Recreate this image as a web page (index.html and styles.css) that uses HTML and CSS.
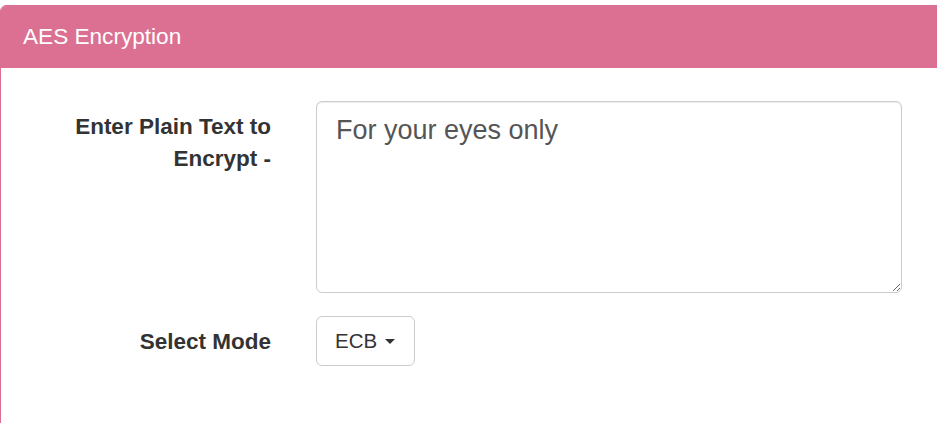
FILE: index.html
```html
<!DOCTYPE html>
<html lang="en">
<head>
<meta charset="utf-8">
<title>AES Encryption</title>
<link rel="stylesheet" href="styles.css">
</head>
<body>
<div class="panel">
  <div class="panel-heading">AES Encryption</div>
  <div class="panel-body">
    <form class="form-grid">
      <label class="form-label" for="plain">Enter Plain Text to Encrypt -</label>
      <textarea id="plain" class="form-textarea">For your eyes only</textarea>
      <label class="form-label">Select Mode</label>
      <div class="form-field">
        <button type="button" class="dropdown-btn">ECB <span class="caret"></span></button>
      </div>
    </form>
  </div>
</div>
</body>
</html>
```
FILE: styles.css
```css
html, body {
  margin: 0;
  padding: 0;
  background: #fff;
  overflow: hidden;
}
body {
  padding-top: 5px;
  font-family: "Liberation Sans", Arial, sans-serif;
  color: #333;
}
.panel {
  border: 1px solid #db7093;
  border-radius: 6px;
  margin-right: -30px;
  min-height: 600px;
  background: #fff;
}
.panel-heading {
  background: #db7093;
  color: #fff;
  height: 62px;
  display: flex;
  align-items: center;
  padding: 0 22px;
  font-size: 22.6px;
  border-radius: 5px 5px 0 0;
}
.panel-body {
  padding-top: 33px;
}
.form-grid {
  display: grid;
  grid-template-columns: 270px 586px;
  column-gap: 45px;
  row-gap: 23px;
  margin: 0;
}
.form-label {
  text-align: right;
  font-weight: bold;
  font-size: 22.5px;
  line-height: 32px;
  padding-top: 10px;
  color: #333;
}
.form-textarea {
  box-sizing: border-box;
  width: 586px;
  height: 192px;
  border: 1px solid #ccc;
  border-radius: 6px;
  padding: 11px 19px;
  font-family: "Liberation Sans", Arial, sans-serif;
  font-size: 27px;
  line-height: 34px;
  color: #555;
  resize: vertical;
  box-shadow: inset 0 1px 1px rgba(0,0,0,0.075);
  margin: 0;
}
.form-field {
  display: flex;
}
.dropdown-btn {
  box-sizing: border-box;
  width: 99px;
  height: 50px;
  padding: 0 0 0 18px;
  border: 1px solid #ccc;
  border-radius: 6px;
  background: #fff;
  color: #333;
  font-family: "Liberation Sans", Arial, sans-serif;
  font-size: 20.5px;
  line-height: 28px;
  display: flex;
  align-items: center;
}
.caret {
  display: inline-block;
  width: 0;
  height: 0;
  margin-left: 8px;
  border-top: 5px solid #333;
  border-left: 5px solid transparent;
  border-right: 5px solid transparent;
}
```
